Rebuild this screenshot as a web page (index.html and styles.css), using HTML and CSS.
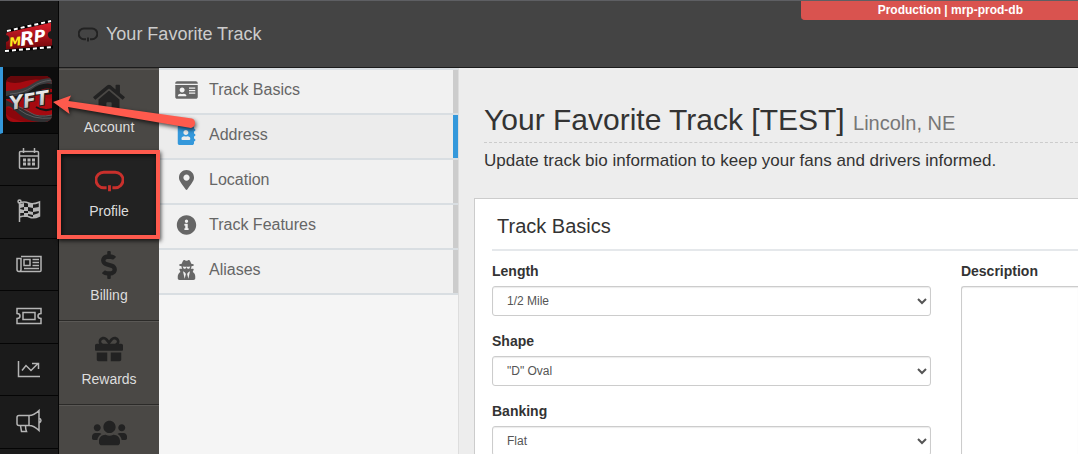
FILE: index.html
```
<!DOCTYPE html>
<html lang="en">
  <head>
    <meta charset="UTF-8">
    <title>Your Favorite Track - Profile</title>
    <meta name="viewport" content="width=device-width, initial-scale=1">
    <link rel="stylesheet" href="styles.css">
  </head>
  <body>
    <nav class="rail" aria-label="Main">
      <a class="rail-logo" href="#" aria-label="MRP home">
        <svg width="48" height="34" viewBox="0 0 48 34">
          <defs>
            <linearGradient id="ticket" x1="0" y1="0" x2="0" y2="1">
              <stop offset="0" stop-color="#e0202c"/>
              <stop offset="1" stop-color="#6d0509"/>
            </linearGradient>
          </defs>
          <path d="M2 13L46 3v9q-4 1-3 5 1 3 4 3v8L1 31v-8q4-1 3-5-1-2-3-2z" fill="url(#ticket)"/>
          <path d="M2 12L46 2" stroke="#000" stroke-width="3"/>
          <path d="M2 12L46 2" stroke="#fff" stroke-width="2" stroke-dasharray="4 3"/>
          <path d="M0 32L48 28" stroke="#000" stroke-width="3"/>
          <path d="M0 32L48 28" stroke="#fff" stroke-width="2" stroke-dasharray="4 3"/>
          <g class="logo-text" transform="rotate(-7 24 20)">
            <text x="4" y="25" font-size="12" fill="#ffe81f">M</text>
            <text x="15" y="26" font-size="19" fill="#fff">R</text>
            <text x="29" y="24" font-size="16" fill="#fff">P</text>
          </g>
        </svg>
      </a>
      <a class="rail-track" href="#" aria-label="YFT">
        <svg width="46" height="46" viewBox="0 0 46 46">
          <defs>
            <clipPath id="tile"><rect width="46" height="46" rx="7"/></clipPath>
            <linearGradient id="chrome" x1="0" y1="0" x2="0" y2="1">
              <stop offset="0" stop-color="#fff"/>
              <stop offset="1" stop-color="#a9a9a9"/>
            </linearGradient>
          </defs>
          <g clip-path="url(#tile)">
            <rect width="46" height="46" fill="#a50a10"/>
            <path d="M0 0h46v7Q32 1 20 5T0 5z" fill="#65080b"/>
            <path d="M46 2Q34 2 26 8T0 15v6q18 1 28-7t18-6z" fill="#3c3c3e"/>
            <path d="M46 8Q35 6 25 14T0 20v3q18 0 28-6t18-4z" fill="#171717"/>
            <path d="M0 24q10 5 20 11t26 4v7H30Q16 44 10 36T0 31z" fill="#303032"/>
            <path d="M0 31q8 2 14 8t20 7H20Q6 44 0 38z" fill="#8b070c"/>
            <path d="M8 29q10 3 17 8t21 2M12 33q8 6 16 8t18 1M46 4Q34 5 26 11T4 18" fill="none" stroke="#5c5c5e"/>
            <path d="M35 18q6 6 11 4v11q-8 3-16-2z" fill="#b20b11"/>
            <path d="M33 16q6 3 13 1M30 31q8 5 16 2" fill="none" stroke="#151515" stroke-width="2"/>
            <text class="logo-text tile-text" x="3" y="31" font-size="19" fill="url(#chrome)" transform="rotate(-9 23 24)">YFT</text>
          </g>
        </svg>
      </a>
      <a class="rail-link" href="#" aria-label="Schedule">
        <svg class="line-icon" width="26" height="26" viewBox="0 0 26 26">
          <path d="M4.5 5.5h17q1 0 1 1v15q0 1-1 1h-17q-1 0-1-1v-15q0-1 1-1zM3.5 10h19M7.5 2v5M18.500 2v5"/>
          <path d="M7 14h3m1.5 0h3m1.5 0h3M7 18h3m1.5 0h3m1.5 0h3" stroke-width="3"/>
        </svg>
      </a>
      <a class="rail-link" href="#" aria-label="Races">
        <svg class="line-icon" width="26" height="26" viewBox="0 0 26 26">
          <path d="M3.5 4v20M3.5 5q5-2 9 0t11-1v14q-6 3-10 1t-10 0"/>
          <circle cx="3.5" cy="3.5" r="1.5"/>
          <path class="checks" d="M4 6l4-1v4l-4 1zM12 5l5 1v4l-5-1zM8 9l4 0v4H8zM17 10l6-1v4l-6 1zM4 11l4 1v3H4zM12 13l5 1v3l-5-1zM8 15h4v4H8zM17 17l6-2v3l-6 2z"/>
        </svg>
      </a>
      <a class="rail-link" href="#" aria-label="News">
        <svg class="line-icon" width="26" height="26" viewBox="0 0 26 26">
          <path d="M5 5.5h20v14q0 1-1 1H3q-2 0-2-2V7.5h4v11q0 2-2 2M8 8.5h6v6H8zM16.5 8.5H23M16.5 11.5H23M16.5 14.5H23M8 17.5h15"/>
        </svg>
      </a>
      <a class="rail-link" href="#" aria-label="Tickets">
        <svg class="line-icon" width="26" height="26" viewBox="0 0 26 26">
          <path d="M1 5.500h24v5q-3 0-3 2.500t3 2.500v5H1v-5q3 0 3-2.500t-3-2.500zM7 9.500h12v7H7z"/>
        </svg>
      </a>
      <a class="rail-link" href="#" aria-label="Analytics">
        <svg class="line-icon" width="26" height="26" viewBox="0 0 26 26">
          <path d="M2.5 5v15.5H24M6 14.5l4-5 5 5 7-7M16 7.5h6.5V13"/>
        </svg>
      </a>
      <a class="rail-link" href="#" aria-label="Announcements">
        <svg class="line-icon" width="26" height="26" viewBox="0 0 26 26">
          <path d="M13 7.5H3q-2 0-2 2v6q0 2 2 2h10q5 0 10 5v-20q-5 5-10 5zM13 7.5v10M23 10q2 1 2 2.500T23 15M4.500 17.500l1 6h5q-1-2-1-6"/>
        </svg>
      </a>
    </nav>

    <div class="app">
      <header class="topbar">
        <svg class="track-icon" width="20" height="15" viewBox="0 0 30 21">
          <path d="M12 17.500H9a8 8 0 0 1 0-16h12a8 8 0 0 1 0 16h-3M15 15v6"/>
        </svg>
        <span class="topbar-title">Your Favorite Track</span>
        <span class="env-badge">Production | mrp-prod-db</span>
      </header>

      <div class="columns">
        <nav class="sections" aria-label="Track sections">
          <a class="section" href="#">
            <svg class="icon" width="32" height="28" viewBox="0 0 576 512"><path d="M280.370 148.260L96 300.110V464a16 16 0 0 0 16 16l112.060-.29a16 16 0 0 0 15.920-16V368a16 16 0 0 1 16-16h64a16 16 0 0 1 16 16v95.640a16 16 0 0 0 16 16.050L464 480a16 16 0 0 0 16-16V300L295.670 148.260a12.190 12.190 0 0 0-15.300 0zM571.600 251.470L488 182.560V44.050a12 12 0 0 0-12-12h-56a12 12 0 0 0-12 12v72.610L318.470 43a48 48 0 0 0-61 0L4.340 251.470a12 12 0 0 0-1.600 16.900l25.500 31A12 12 0 0 0 45.150 301l235.220-193.740a12.190 12.190 0 0 1 15.300 0L530.900 301a12 12 0 0 0 16.900-1.600l25.500-31a12 12 0 0 0-1.700-16.930z"/></svg>
            Account
          </a>
          <a class="section section-active" href="#" aria-current="page">
            <svg class="track-icon" width="29" height="28" viewBox="0 0 30 21">
              <path d="M12 17.500H9a8 8 0 0 1 0-16h12a8 8 0 0 1 0 16h-3M15 15v6"/>
            </svg>
            Profile
          </a>
          <a class="section" href="#">
            <svg class="icon" width="32" height="28" viewBox="0 0 288 512"><path d="M209.200 233.400l-108-31.600C88.700 198.200 80 186.500 80 173.500c0-16.300 13.200-29.500 29.500-29.500h66.300c12.200 0 24.200 3.700 34.200 10.500 6.100 4.100 14.300 3.100 19.500-2l34.800-34c7.100-6.900 6.100-18.400-1.800-24.500C238 74.800 207.400 64.100 176 64V16c0-8.800-7.200-16-16-16h-32c-8.800 0-16 7.200-16 16v48h-2.500C45.800 64-5.400 118.700.5 183.600c4.200 46.100 39.400 83.600 83.800 96.600l102.500 30c12.500 3.700 21.200 15.300 21.200 28.300 0 16.300-13.200 29.500-29.500 29.500h-66.300C100 368 88 364.300 78 357.500c-6.100-4.100-14.300-3.100-19.500 2l-34.800 34c-7.100 6.900-6.100 18.400 1.800 24.500 24.500 19.200 55.100 29.900 86.500 30v48c0 8.800 7.200 16 16 16h32c8.800 0 16-7.200 16-16v-48.200c46.600-.9 90.300-28.600 105.700-72.700 21.500-61.600-14.600-124.800-72.500-141.700z"/></svg>
            Billing
          </a>
          <a class="section" href="#">
            <svg class="icon" width="32" height="28" viewBox="0 0 512 512"><path d="M32 448c0 17.700 14.300 32 32 32h160V320H32v128zm256 32h160c17.700 0 32-14.300 32-32V320H288v160zm192-320h-42.100c6.200-12.100 10.100-25.500 10.100-40 0-48.500-39.500-88-88-88-41.600 0-68.500 21.300-103 68.300-34.500-47-61.400-68.300-103-68.300-48.500 0-88 39.500-88 88 0 14.500 3.800 27.900 10.100 40H32c-17.700 0-32 14.300-32 32v80c0 8.800 7.200 16 16 16h480c8.800 0 16-7.200 16-16v-80c0-17.700-14.300-32-32-32zm-326.100 0c-22.100 0-40-17.900-40-40s17.900-40 40-40c19.900 0 34.600 3.300 86.100 80h-86.100zm206.100 0h-86.100c51.400-76.500 65.700-80 86.100-80 22.100 0 40 17.900 40 40s-17.900 40-40 40z"/></svg>
            Rewards
          </a>
          <a class="section" href="#" aria-label="Users">
            <svg class="icon" width="35" height="28" viewBox="0 0 640 512"><path d="M96 224c35.300 0 64-28.700 64-64s-28.700-64-64-64-64 28.700-64 64 28.700 64 64 64zm448 0c35.300 0 64-28.700 64-64s-28.700-64-64-64-64 28.700-64 64 28.700 64 64 64zm32 32h-64c-17.600 0-33.500 7.100-45.100 18.600 40.300 22.100 68.900 62 75.100 109.400h66c17.700 0 32-14.300 32-32v-32c0-35.300-28.700-64-64-64zm-256 0c61.900 0 112-50.100 112-112S381.900 32 320 32 208 82.100 208 144s50.100 112 112 112zm76.800 32h-8.300c-20.800 10-43.900 16-68.500 16s-47.600-6-68.500-16h-8.300C179.600 288 128 339.600 128 403.200V432c0 26.500 21.500 48 48 48h288c26.500 0 48-21.500 48-48v-28.800c0-63.600-51.600-115.200-115.200-115.200zm-223.700-13.400C161.500 263.100 145.600 256 128 256H64c-35.300 0-64 28.700-64 64v32c0 17.700 14.300 32 32 32h65.900c6.300-47.400 34.900-87.300 75.200-109.400z"/></svg>
          </a>
        </nav>

        <nav class="submenu" aria-label="Profile pages">
          <a class="submenu-item" href="#">
            <svg class="icon" width="23" height="20" viewBox="0 0 576 512"><path fill-rule="evenodd" d="M528 32H48C21.500 32 0 53.500 0 80v16h576V80c0-26.500-21.500-48-48-48zM0 432c0 26.500 21.500 48 48 48h480c26.500 0 48-21.500 48-48V128H0v304zM352 192h160v32H352zM352 256h160v32H352zM352 320h160v32H352zM176 192c35.300 0 64 28.700 64 64s-28.700 64-64 64-64-28.700-64-64 28.700-64 64-64zM67.100 396.200C75.500 370.500 99.600 352 128 352h8.200c12.300 5.100 25.700 8 39.800 8s27.600-2.900 39.800-8h8.200c28.400 0 52.500 18.500 60.900 44.200 3.200 9.900-5.200 19.800-15.600 19.800H82.700c-10.400 0-18.800-10-15.600-19.800z"/></svg>
            Track Basics
          </a>
          <a class="submenu-item submenu-active" href="#">
            <svg class="icon" width="23" height="20" viewBox="0 0 448 512"><path d="M436 160c6.600 0 12-5.400 12-12v-40c0-6.600-5.400-12-12-12h-20V48c0-26.500-21.500-48-48-48H48C21.500 0 0 21.500 0 48v416c0 26.500 21.500 48 48 48h320c26.500 0 48-21.500 48-48v-48h20c6.600 0 12-5.400 12-12v-40c0-6.600-5.400-12-12-12h-20v-64h20c6.600 0 12-5.400 12-12v-40c0-6.600-5.400-12-12-12h-20v-64h20zm-228-32c35.300 0 64 28.700 64 64s-28.700 64-64 64-64-28.700-64-64 28.700-64 64-64zm112 236.800c0 10.600-10 19.200-22.400 19.200H118.400C106 384 96 375.400 96 364.800v-19.200c0-31.800 30.100-57.600 67.200-57.600h5c12.300 5.100 25.700 8 39.800 8s27.600-2.900 39.800-8h5c37.100 0 67.200 25.800 67.200 57.600v19.200z"/></svg>
            Address
          </a>
          <a class="submenu-item" href="#">
            <svg class="icon" width="23" height="20" viewBox="0 0 384 512"><path d="M172.268 501.670C26.970 291.031 0 269.413 0 192 0 85.961 85.961 0 192 0s192 85.961 192 192c0 77.413-26.970 99.031-172.268 309.670-9.535 13.774-29.930 13.773-39.464 0zM192 272c44.183 0 80-35.817 80-80s-35.817-80-80-80-80 35.817-80 80 35.817 80 80 80z"/></svg>
            Location
          </a>
          <a class="submenu-item" href="#">
            <svg class="icon" width="23" height="20" viewBox="0 0 512 512"><path d="M256 8C119.043 8 8 119.083 8 256c0 136.997 111.043 248 248 248s248-111.003 248-248C504 119.083 392.957 8 256 8zm0 110c23.196 0 42 18.804 42 42s-18.804 42-42 42-42-18.804-42-42 18.804-42 42-42zm56 254c0 6.627-5.373 12-12 12h-88c-6.627 0-12-5.373-12-12v-24c0-6.627 5.373-12 12-12h12v-64h-12c-6.627 0-12-5.373-12-12v-24c0-6.627 5.373-12 12-12h64c6.627 0 12 5.373 12 12v100h12c6.627 0 12 5.373 12 12v24z"/></svg>
            Track Features
          </a>
          <a class="submenu-item" href="#">
            <svg class="icon" width="23" height="20" viewBox="0 0 448 512"><path d="M383.900 308.300l23.900-62.600c4-10.500-3.700-21.700-15-21.700h-58.500c11-18.900 17.800-40.600 17.800-64v-.3c39.200-7.800 64-19.100 64-31.700 0-13.300-27.300-25.100-70.100-33-9.200-32.800-27-65.800-40.600-82.800-9.500-11.900-25.900-15.600-39.500-8.800l-27.600 13.800c-9 4.500-19.600 4.500-28.600 0L182.100 3.400c-13.600-6.800-30-3.100-39.500 8.800-13.500 17-31.400 50-40.600 82.800-42.700 7.900-70 19.700-70 33 0 12.600 24.800 23.900 64 31.700v.3c0 23.400 6.800 45.100 17.800 64H56.300c-11.500 0-19.200 11.700-14.700 22.300l25.800 60.200C27.300 329.800 0 372.700 0 422.400v44.800C0 491.900 20.100 512 44.800 512h358.400c24.700 0 44.800-20.100 44.800-44.800v-44.800c0-48.400-25.800-90.400-64.100-114.100zM176 480l-41.600-192 49.600 32 24 40-32 120zm96 0l-32-120 24-40 49.600-32L272 480zm41.700-298.500c-3.900 11.900-7 24.600-16.500 33.400-10.100 9.300-48 22.400-64-25-2.800-8.400-15.400-8.400-18.300 0-17 50.200-56 32.400-64 25-9.500-8.800-12.700-21.500-16.500-33.400-.8-2.500-6.300-5.700-6.300-5.800v-10.800c28.300 3.600 61 5.800 96 5.800s67.700-2.100 96-5.800v10.800c-.1.1-5.600 3.200-6.400 5.800z"/></svg>
            Aliases
          </a>
        </nav>

        <main class="content">
          <div class="page-head">
            <h1>Your Favorite Track [TEST] <small>Lincoln, NE</small></h1>
            <p>Update track bio information to keep your fans and drivers informed.</p>
          </div>
          <section class="panel">
            <h2>Track Basics</h2>
            <form class="form">
              <div class="form-col">
                <div class="field">
                  <label for="length">Length</label>
                  <select id="length"><option>1/2 Mile</option></select>
                </div>
                <div class="field">
                  <label for="shape">Shape</label>
                  <select id="shape"><option>"D" Oval</option></select>
                </div>
                <div class="field">
                  <label for="banking">Banking</label>
                  <select id="banking"><option>Flat</option></select>
                </div>
              </div>
              <div class="field">
                <label for="description">Description</label>
                <textarea id="description" rows="14"></textarea>
              </div>
            </form>
          </section>
        </main>
      </div>
    </div>

    <!-- callouts over the page -->
    <div class="callout-box"></div>
    <svg class="callout-arrow" width="150" height="50" viewBox="0 0 150 50">
      <path d="M3 17L21 10.500 18.500 16 142 33.500a5 5 0 0 1-1 9.500L18 22l1.500 7z"/>
    </svg>
  </body>
</html>
```
FILE: styles.css
```
* {
  box-sizing: border-box;
}

body {
  margin: 0;
  height: 100vh;
  overflow: hidden;
  display: flex;
  border-top: 1px solid #5e5f63;
  font-family: "Liberation Sans", Arial, sans-serif;
  font-size: 14px;
  color: #333;
  background: #ededed;
}

a {
  color: inherit;
  text-decoration: none;
}

svg {
  display: block;
}

.icon {
  fill: currentColor;
}

.track-icon {
  fill: none;
  stroke: currentColor;
  stroke-width: 3;
}

/* left icon rail */
.rail {
  flex: none;
  width: 59px;
  background: #1b1b1b;
  border-right: 1px solid #050505;
  color: #b5b5b5;
}

.rail a {
  display: flex;
  align-items: center;
  justify-content: center;
  height: 52px;
  padding-bottom: 2px;
  border-bottom: 1px solid #050505;
}

.rail .rail-link:nth-child(even) {
  height: 53px;
}

.rail .rail-logo {
  height: 66px;
  border-bottom: 0;
  padding: 4px 0 0;
}

.rail .rail-track {
  height: 67px;
  padding-right: 3px;
  background: #0d0d0d;
  border-left: 3px solid #3498db;
}

.line-icon {
  fill: none;
  stroke: currentColor;
  stroke-width: 1.5;
}

.line-icon .checks {
  fill: currentColor;
  stroke: none;
}

.logo-text {
  font-family: "DejaVu Sans", sans-serif;
  font-weight: bold;
  font-style: italic;
}

.tile-text {
  stroke: #222;
  stroke-width: 2;
  paint-order: stroke;
}

.app {
  flex: 1;
  min-width: 0;
  display: flex;
  flex-direction: column;
}

.topbar {
  flex: none;
  display: flex;
  align-items: center;
  height: 67px;
  padding-left: 19px;
  background: #444;
  border-bottom: 1px solid #1c1c1c;
}

.topbar .track-icon {
  color: #222;
}

.topbar-title {
  margin-left: 8px;
  font-size: 18px;
  color: #ccc;
}

.env-badge {
  align-self: flex-start;
  margin-left: auto;
  padding: 0 55px 0 77px;
  line-height: 18px;
  font-size: 12px;
  font-weight: bold;
  color: #fff;
  background: #d9534f;
  border-bottom: 1px solid #d9534f;
  border-bottom-left-radius: 4px;
}

.columns {
  flex: 1;
  min-height: 0;
  display: flex;
}

/* section tabs */
.sections {
  flex: none;
  width: 100px;
  padding-top: 1px;
  overflow: hidden;
  background: #4a4845;
}

.section {
  display: flex;
  flex-direction: column;
  align-items: center;
  gap: 8px;
  height: 84px;
  padding-top: 13px;
  line-height: 16px;
  color: #ddd;
  border-top: 1px solid #5a5855;
  border-bottom: 1px solid #2b2a28;
}

.section .icon {
  color: #222;
}

.section-active {
  background: #222;
}

.section-active .track-icon {
  color: #c9302c;
}

/* pages of the current section */
.submenu {
  flex: none;
  width: 300px;
  background: #f5f5f5;
  border-top: 2px solid #d9dee2;
  border-right: 1px solid #ddd;
}

.submenu-item {
  display: flex;
  align-items: center;
  gap: 11px;
  height: 45px;
  padding: 0 16px 3px;
  font-size: 16px;
  color: #666;
  background: linear-gradient(#ccc, #ccc) right / 5px 100% no-repeat #f1f1f1;
  border-bottom: 2px solid #d9dee2;
}

.submenu-active {
  background: linear-gradient(#3498db, #3498db) right / 5px 100% no-repeat #ececec;
}

.submenu-active .icon {
  color: #3498db;
}

.content {
  flex: 1;
  min-width: 0;
  padding: 34px 0 0 15px;
}

.page-head {
  padding-left: 10px;
}

h1 {
  margin: 0;
  padding-bottom: 1px;
  line-height: 36px;
  font-size: 30px;
  font-weight: normal;
  white-space: nowrap;
  border-bottom: 1px dashed #ccc;
}

h1 small {
  font-size: 20px;
  color: #777;
}

.page-head p {
  margin: 0;
  padding: 7px 0 27px;
  line-height: 21px;
  font-size: 17px;
}

.panel {
  padding-left: 17px;
  background: #fff;
  border: 1px solid #ccc;
  border-right: 0;
}

h2 {
  margin: 0;
  padding: 13px 5px 9px;
  line-height: 28px;
  font-size: 20px;
  font-weight: normal;
  border-bottom: 2px solid #e5e8eb;
}

.form {
  display: grid;
  grid-template-columns: 15fr 4fr;
  gap: 30px;
  padding-top: 10px;
}

.form-col {
  display: flex;
  flex-direction: column;
  gap: 15px;
}

.field label {
  display: block;
  margin-bottom: 5px;
  line-height: 20px;
  font-weight: bold;
}

select,
textarea {
  display: block;
  width: 100%;
  font-family: inherit;
  font-size: 12px;
  color: #555;
  background: #fff;
  border: 1px solid #ccc;
  border-radius: 3px;
  box-shadow: inset 0 1px 1px rgba(0, 0, 0, 0.08);
}

select {
  height: 30px;
  padding: 0 0 0 10px;
}

textarea {
  border-right: 0;
  border-radius: 3px 0 0 3px;
  resize: none;
}

.callout-box {
  position: absolute;
  left: 57px;
  top: 150px;
  width: 103px;
  height: 89px;
  border: 4px solid #ff5a4d;
  box-shadow: 1px 2px 4px rgba(0, 0, 0, 0.7), inset 1px 2px 4px rgba(0, 0, 0, 0.7);
  pointer-events: none;
}

.callout-arrow {
  position: absolute;
  left: 50px;
  top: 85px;
  overflow: visible;
  fill: #ff5a4d;
  filter: drop-shadow(1px 2px 2px rgba(0, 0, 0, 0.7));
  pointer-events: none;
}
```
